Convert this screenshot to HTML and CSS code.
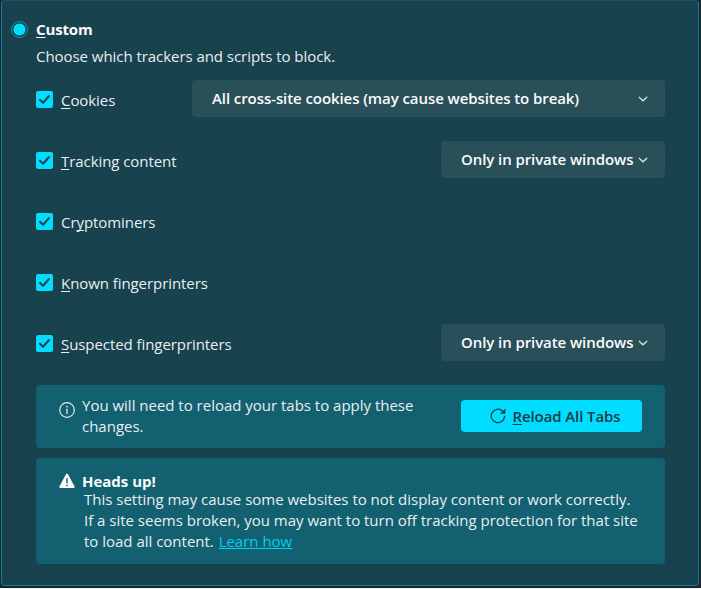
FILE: index.html
```html
<!DOCTYPE html>
<html lang="en">

<head>
  <meta charset="UTF-8">
  <meta name="viewport" content="width=device-width, initial-scale=1.0">
  <title>Tracking Protection</title>
  <link rel="stylesheet" href="styles.css">
</head>

<body>
  <div class="card">
    <div class="card-header">
      <span class="radio"></span>
      <h2><u>C</u>ustom</h2>
    </div>
    <p class="description">Choose which trackers and scripts to block.</p>

    <div class="options">
      <div class="row">
        <span class="checkbox"><svg viewBox="0 0 17 17"><path d="M4 8.8l3 3 6-6.8" /></svg></span>
        <span class="row-label"><u>C</u>ookies</span>
        <div class="select select-wide">
          <span>All cross-site cookies (may cause websites to break)</span>
          <svg class="chevron" viewBox="0 0 10 6"><path d="M1.2 1.2L5 4.8l3.8-3.6" /></svg>
        </div>
      </div>
      <div class="row">
        <span class="checkbox"><svg viewBox="0 0 17 17"><path d="M4 8.8l3 3 6-6.8" /></svg></span>
        <span class="row-label"><u>T</u>racking content</span>
        <div class="select">
          <span>Only in private windows</span>
          <svg class="chevron" viewBox="0 0 10 6"><path d="M1.2 1.2L5 4.8l3.8-3.6" /></svg>
        </div>
      </div>
      <div class="row">
        <span class="checkbox"><svg viewBox="0 0 17 17"><path d="M4 8.8l3 3 6-6.8" /></svg></span>
        <span class="row-label">Cr<u>y</u>ptominers</span>
      </div>
      <div class="row">
        <span class="checkbox"><svg viewBox="0 0 17 17"><path d="M4 8.8l3 3 6-6.8" /></svg></span>
        <span class="row-label"><u>K</u>nown fingerprinters</span>
      </div>
      <div class="row">
        <span class="checkbox"><svg viewBox="0 0 17 17"><path d="M4 8.8l3 3 6-6.8" /></svg></span>
        <span class="row-label"><u>S</u>uspected fingerprinters</span>
        <div class="select">
          <span>Only in private windows</span>
          <svg class="chevron" viewBox="0 0 10 6"><path d="M1.2 1.2L5 4.8l3.8-3.6" /></svg>
        </div>
      </div>
    </div>

    <div class="message reload">
      <svg class="message-icon" viewBox="0 0 16 16">
        <circle cx="8" cy="8" r="7.3" fill="none" stroke="currentColor" stroke-width="1.2" />
        <path d="M8 7.2v4.4" stroke="currentColor" stroke-width="1.3" stroke-linecap="round" />
        <circle cx="8" cy="4.6" r="0.9" fill="currentColor" />
      </svg>
      <p class="message-text">You will need to reload your tabs to apply these changes.</p>
      <button class="reload-button">
        <svg class="reload-icon" viewBox="0 0 16 16">
          <path d="M14.6 8.4A6.7 6.7 0 1 1 12.4 2.9" fill="none" stroke="currentColor" stroke-width="1.3" stroke-linecap="round" />
          <path d="M15.3 0.6v5.2h-5.2z" fill="currentColor" />
        </svg>
        <span><u>R</u>eload All Tabs</span>
      </button>
    </div>

    <div class="message warning">
      <svg class="message-icon" viewBox="0 0 16 16">
        <path d="M8 1.6L14.7 14H1.3z" fill="currentColor" stroke="currentColor" stroke-width="2" stroke-linejoin="round" />
        <path d="M8 5.6v4.2" stroke="#136071" stroke-width="1.4" stroke-linecap="round" />
        <circle cx="8" cy="12.3" r="0.85" fill="#136071" />
      </svg>
      <div>
        <h3>Heads up!</h3>
        <p class="warning-text">This setting may cause some websites to not display content or work correctly. If a site seems broken, you may want to turn off tracking protection for that site to load all content. <a href="#">Learn how</a></p>
      </div>
    </div>
  </div>
</body>

</html>
```

FILE: styles.css
```css
html {
  background-color: #f4f4f5;
}

body {
  margin: 0;
  height: 588px;
  box-sizing: border-box;
  padding: 0 2px 2px 1px;
  background-color: #1f2530;
  font-family: "Open Sans", "Noto Sans", sans-serif;
  font-size: 15px;
  line-height: 21px;
  letter-spacing: -0.01px;
  color: #e9eef0;
}

h2,
h3,
p {
  margin: 0;
}

u {
  text-decoration-thickness: 1px;
  text-underline-offset: 2px;
  text-decoration-skip-ink: none;
}

.card {
  box-sizing: border-box;
  height: 586px;
  padding: 18px 33px 0 9px;
  background-color: #18424e;
  border: 1px solid #0a8195;
  border-top-color: #155665;
  border-radius: 4px;
}

.card-header {
  display: flex;
  align-items: center;
  gap: 8px;
}

.card-header h2,
.warning h3 {
  font-size: 15px;
  line-height: 21px;
  font-weight: 700;
  color: #fbfbfe;
}

.card-header h2 {
  letter-spacing: -0.15px;
}

.radio {
  box-sizing: border-box;
  width: 17px;
  height: 17px;
  border: 1px solid #079fb7;
  border-radius: 50%;
  background: radial-gradient(circle, #00ddff 5.7px, transparent 6.3px);
}

.description {
  margin: 6px 0 0 25px;
  letter-spacing: -0.05px;
}

.options {
  display: flex;
  flex-direction: column;
  gap: 24px;
  margin: 13px 0 24px 25px;
}

.row {
  display: flex;
  align-items: center;
  height: 37px;
}

.checkbox {
  width: 17px;
  height: 17px;
  margin-top: 2px;
  border-radius: 2px;
  background-color: #00ddff;
}

.checkbox svg {
  display: block;
  fill: none;
  stroke: #17414d;
  stroke-width: 2;
  stroke-linecap: round;
  stroke-linejoin: round;
}

.row-label {
  margin: 4px 0 0 8px;
  letter-spacing: -0.07px;
}

.select {
  box-sizing: border-box;
  display: flex;
  align-items: center;
  justify-content: space-between;
  width: 224px;
  height: 37px;
  margin-left: auto;
  padding: 0 17px 0 20px;
  border-radius: 4px;
  background-color: #294f59;
  color: #fbfbfe;
  font-weight: 600;
  letter-spacing: -0.08px;
  white-space: nowrap;
}

.select-wide {
  width: 473px;
}

.chevron {
  width: 10px;
  height: 6px;
  fill: none;
  stroke: #dfe6e9;
  stroke-width: 1.2;
  stroke-linecap: round;
}

.message {
  box-sizing: border-box;
  display: flex;
  margin-left: 25px;
  padding: 0 23px;
  border-radius: 4px;
  background-color: #136071;
}

.message-icon {
  flex: none;
  width: 16px;
  height: 16px;
  color: #fbfbfe;
}

.reload {
  align-items: center;
  height: 63px;
  padding-bottom: 1px;
}

.reload .message-icon {
  margin: -12px 7px 0 0;
  color: #dde8eb;
}

.message-text {
  width: 345px;
}

.reload-button {
  display: flex;
  align-items: center;
  justify-content: center;
  gap: 7px;
  width: 181px;
  height: 32px;
  margin-left: auto;
  padding: 0 0 0 7px;
  border: none;
  border-radius: 4px;
  background-color: #00ddff;
  color: #173c48;
  font-family: inherit;
  font-size: 15px;
  font-weight: 600;
  letter-spacing: -0.1px;
}

.reload-icon {
  width: 16px;
  height: 16px;
  margin-bottom: 1px;
}

.warning {
  height: 106px;
  margin-top: 10px;
  padding-top: 13px;
}

.warning .message-icon {
  margin: 2px 7px 0 0;
}

.warning-text {
  width: 556px;
  margin: -3px 0 0 2px;
}

.warning-text a {
  margin-left: 1px;
  color: #00cfee;
}
```
